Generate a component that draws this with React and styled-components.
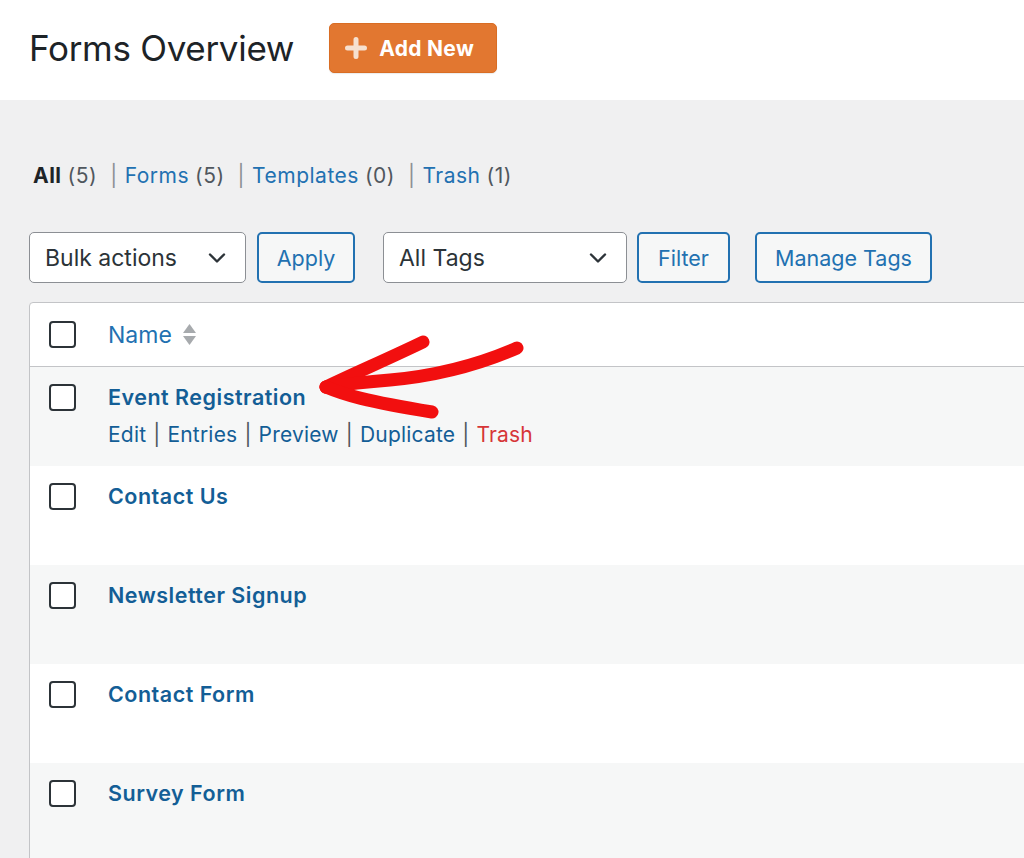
import React from "react";
import styled, { createGlobalStyle } from "styled-components";

const Global = createGlobalStyle`
  html, body { margin: 0; padding: 0; }
  body {
    background: #f0f0f1;
    font-family: Inter, "Liberation Sans", Arial, sans-serif;
    color: #1d2327;
  }
  * { box-sizing: border-box; }
`;

const Page = styled.div`
  position: relative;
  min-height: 858px;
  overflow: hidden;
`;

const Header = styled.header`
  background: #ffffff;
  height: 100px;
  padding: 0 29px 4px;
  display: flex;
  align-items: center;
  gap: 35px;
`;

const Title = styled.h1`
  margin: 0;
  font-size: 35px;
  font-weight: 400;
  color: #1d2327;
  letter-spacing: -0.3px;
`;

const AddButton = styled.button`
  display: inline-flex;
  align-items: center;
  gap: 12px;
  height: 50px;
  width: 168px;
  padding: 0 0 0 15px;
  background: #e27730;
  border: 1px solid #d96d24;
  border-radius: 5px;
  color: #fff;
  font-family: inherit;
  font-size: 21px;
  font-weight: 700;
  letter-spacing: 0.3px;
  box-shadow: 0 1px 1px rgba(0,0,0,0.08);
`;

const Main = styled.main`
  padding: 62px 0 0 29px;
`;

const Views = styled.ul`
  list-style: none;
  margin: 0 0 0 4px;
  padding: 0;
  display: flex;
  align-items: center;
  font-size: 21px;
  line-height: 28px;
  letter-spacing: 0.5px;
  color: #50575e;
`;

const ViewItem = styled.li`
  display: inline-flex;
  gap: 6px;
  &:not(:last-child)::after {
    content: "|";
    color: #8c8f94;
    margin: 0 7px 0 7px;
  }
`;

const ViewLabel = styled.span`
  color: ${p => (p.$current ? "#1d2327" : "#2271b1")};
  font-weight: ${p => (p.$current ? 700 : 400)};
`;

const Toolbar = styled.div`
  display: flex;
  align-items: center;
  margin-top: 42px;
  height: 51px;
`;

const Select = styled.div`
  display: flex;
  align-items: center;
  justify-content: space-between;
  width: ${p => p.$w}px;
  height: 51px;
  margin-right: ${p => p.$mr}px;
  padding: 0 19px 0 15px;
  background: #fff;
  border: 1.5px solid #8c8f94;
  border-radius: 5px;
  font-size: 23px;
  color: #2c3338;
`;

const Button = styled.button`
  height: 51px;
  width: ${p => p.$w}px;
  margin-right: ${p => p.$mr}px;
  background: #f6f7f7;
  border: 2px solid #2271b1;
  border-radius: 5px;
  color: #2271b1;
  font-family: inherit;
  font-size: 21.5px;
  padding: 0;
`;

const Table = styled.div`
  margin-top: 19px;
  margin-right: -10px;
  background: #fff;
  border: 1px solid #c3c4c7;
  border-radius: 4px 0 0 0;
`;

const HeadRow = styled.div`
  display: grid;
  grid-template-columns: 59px 1fr;
  align-items: center;
  height: 64px;
  padding-left: 19px;
  border-bottom: 1px solid #c3c4c7;
`;

const Row = styled.div`
  display: grid;
  grid-template-columns: 59px 1fr;
  align-items: start;
  height: 99px;
  padding: 17px 0 0 19px;
  background: ${p => (p.$alt ? "#f6f7f7" : "#ffffff")};
`;

const Check = styled.span`
  display: block;
  width: 27px;
  height: 27px;
  border: 2px solid #2c3338;
  border-radius: 4px;
  background: #fff;
`;

const HeadLabel = styled.span`
  display: inline-flex;
  align-items: center;
  gap: 10px;
  font-size: 23px;
  color: #2271b1;
`;

const RowTitle = styled.div`
  font-size: 21.5px;
  font-weight: 600;
  letter-spacing: 0.5px;
  color: #135e96;
  line-height: 26px;
`;

const Actions = styled.div`
  display: flex;
  margin-top: 12px;
  font-size: 21px;
  line-height: 26px;
  letter-spacing: 0.2px;
`;

const Action = styled.span`
  color: ${p => (p.$danger ? "#d63638" : "#135e96")};
  &:not(:last-child)::after {
    content: "|";
    color: #50575e;
    margin: 0 7px;
  }
`;

const ArrowSvg = styled.svg`
  position: absolute;
  left: 300px;
  top: 325px;
  pointer-events: none;
`;

const Chevron = () => (
  <svg width="18" height="12" viewBox="0 0 18 12">
    <path d="M2 2.5 L9 9.5 L16 2.5" fill="none" stroke="#2c3338" strokeWidth="2.4" strokeLinecap="round" strokeLinejoin="round" />
  </svg>
);

const Plus = () => (
  <svg width="22" height="22" viewBox="0 0 22 22">
    <path d="M11 2.5 V19.5 M2.5 11 H19.5" stroke="#f6e0cf" strokeWidth="5" strokeLinecap="round" />
  </svg>
);

const SortIcon = () => (
  <svg width="15" height="23" viewBox="0 0 15 23">
    <path d="M7.5 1 L14 10 H1 Z" fill="#a7aaad" />
    <path d="M7.5 22 L14 13 H1 Z" fill="#a7aaad" />
  </svg>
);

const forms = [
  { name: "Event Registration", actions: true },
  { name: "Contact Us" },
  { name: "Newsletter Signup" },
  { name: "Contact Form" },
  { name: "Survey Form" },
];

export default function App() {
  return (
    <Page>
      <Global />
      <Header>
        <Title>Forms Overview</Title>
        <AddButton><Plus />Add New</AddButton>
      </Header>
      <Main>
        <Views>
          <ViewItem><ViewLabel $current>All</ViewLabel>(5)</ViewItem>
          <ViewItem><ViewLabel>Forms</ViewLabel>(5)</ViewItem>
          <ViewItem><ViewLabel>Templates</ViewLabel>(0)</ViewItem>
          <ViewItem><ViewLabel>Trash</ViewLabel>(1)</ViewItem>
        </Views>
        <Toolbar>
          <Select $w={217} $mr={11}>Bulk actions<Chevron /></Select>
          <Button $w={98} $mr={28}>Apply</Button>
          <Select $w={244} $mr={10}>All Tags<Chevron /></Select>
          <Button $w={93} $mr={25}>Filter</Button>
          <Button $w={177} $mr={0}>Manage Tags</Button>
        </Toolbar>
        <Table>
          <HeadRow>
            <Check />
            <HeadLabel>Name<SortIcon /></HeadLabel>
          </HeadRow>
          {forms.map((f, i) => (
            <Row key={f.name} $alt={i % 2 === 0}>
              <Check />
              <div>
                <RowTitle>{f.name}</RowTitle>
                {f.actions && (
                  <Actions>
                    <Action>Edit</Action>
                    <Action>Entries</Action>
                    <Action>Preview</Action>
                    <Action>Duplicate</Action>
                    <Action $danger>Trash</Action>
                  </Actions>
                )}
              </div>
            </Row>
          ))}
        </Table>
      </Main>
      <ArrowSvg width="240" height="100" viewBox="0 0 240 100">
        <g fill="none" stroke="#f20f0f" strokeWidth="13" strokeLinecap="round" strokeLinejoin="round">
          <path d="M123 17 C 90 33, 55 48, 26 62" />
          <path d="M217 23 C 185 37, 145 50, 90 55 C 65 57, 40 60, 26 62" />
          <path d="M26 62 C 45 70, 65 76, 132 87" />
        </g>
      </ArrowSvg>
    </Page>
  );
}
